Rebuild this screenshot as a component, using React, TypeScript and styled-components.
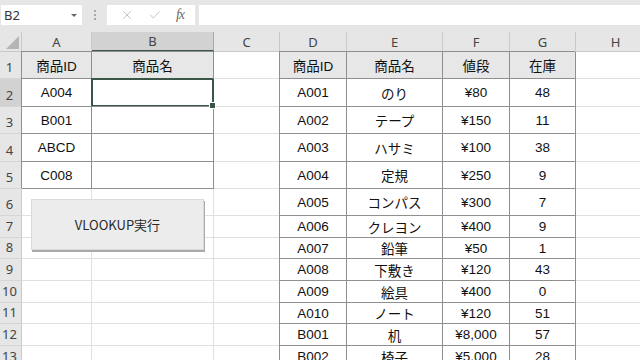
import React from 'react';
import styled, { createGlobalStyle } from 'styled-components';
import { X, Check } from 'lucide-react';

const GlobalStyle = createGlobalStyle`
  html, body {
    margin: 0;
    padding: 0;
    background: #ffffff;
    overflow: hidden;
  }
  body {
    width: 640px;
    height: 360px;
    font-family: 'Liberation Sans', 'Noto Sans CJK JP', sans-serif;
  }
`;

const FRAME = '#8f8f8f';
const GRID = '#e0e0e0';
const HEAD_LINE = '#c9c9c9';
const SELECT = '#3a5646';

const Window = styled.div`
  width: 640px;
  height: 360px;
  overflow: hidden;
  display: flex;
  flex-direction: column;
  background: #fff;
`;

const FormulaBar = styled.div`
  flex: none;
  height: 32px;
  box-sizing: border-box;
  padding-top: 5px;
  background: #e6e6e6;
  display: flex;
  align-items: flex-start;
`;

const NameBox = styled.div`
  width: 81px;
  height: 20px;
  margin-left: 1px;
  box-sizing: border-box;
  padding: 0 5px 0 3px;
  background: #fff;
  display: flex;
  align-items: center;
  justify-content: space-between;
  font: 13px 'Noto Sans', sans-serif;
  color: #333;
`;

const DropArrow = styled.span`
  width: 0;
  height: 0;
  border-left: 3px solid transparent;
  border-right: 3px solid transparent;
  border-top: 3px solid #666;
`;

const Grip = styled.div`
  width: 2px;
  height: 12px;
  margin: 4px 11px 0 12px;
  background: radial-gradient(circle, #a8a8a8 0.9px, transparent 1.1px) 0 0 / 2px 4px repeat-y;
`;

const FuncBox = styled.div`
  width: 88px;
  height: 20px;
  background: #fff;
  display: flex;
  align-items: center;
  justify-content: space-around;
  padding: 0 4px 0 6px;
  box-sizing: border-box;
  color: #b2b2b2;
`;

const Fx = styled.span`
  font: italic 14px 'Liberation Serif', serif;
  color: #6b6b6b;
  letter-spacing: -1px;
`;

const FormulaInput = styled.div`
  flex: 1;
  height: 20px;
  margin-left: 4px;
  background: #fff;
`;

const Sheet = styled.div`
  position: relative;
  display: grid;
  grid-template-columns: 22px 70px 122px 66px 67px 96px 67px 66px 80px;
  grid-template-rows: 20px 27px 28px 27px 28px 27px 27px 22px 21px 22px 22px 21px 22px 22px;
  background: #fff;
`;

const Corner = styled.div`
  background: #e6e6e6;
  border-right: 1px solid ${HEAD_LINE};
  border-bottom: 1px solid ${HEAD_LINE};
  display: flex;
  align-items: flex-end;
  justify-content: flex-end;
  padding: 0 2px 2px 0;
`;

const ColHead = styled.div<{ $active?: boolean }>`
  background: ${(p) => (p.$active ? '#d2d2d2' : '#e6e6e6')};
  border-right: 1px solid ${(p) => (p.$active ? '#a8a8a8' : HEAD_LINE)};
  border-bottom: ${(p) => (p.$active ? `2px solid ${SELECT}` : `1px solid ${HEAD_LINE}`)};
  display: flex;
  align-items: center;
  justify-content: center;
  font: 13px 'Noto Sans', sans-serif;
  color: #444;
`;

const RowHead = styled.div<{ $active?: boolean }>`
  background: ${(p) => (p.$active ? '#d2d2d2' : '#e6e6e6')};
  border-right: 1px solid ${HEAD_LINE};
  border-bottom: 1px solid #d6d6d6;
  display: flex;
  align-items: flex-end;
  justify-content: center;
  padding: 0 2px 2px 0;
  font: 13px 'Noto Sans', sans-serif;
  color: #444;
`;

const Cell = styled.div<{ $framed?: boolean; $head?: boolean; $selected?: boolean }>`
  position: relative;
  background: ${(p) => (p.$head ? '#e7e7e7' : '#fff')};
  border-right: 1px solid ${(p) => (p.$framed ? FRAME : GRID)};
  border-bottom: 1px solid ${(p) => (p.$framed ? FRAME : GRID)};
  box-shadow: ${(p) =>
    p.$selected
      ? `-1px -1px 0 0 ${SELECT}, inset 0 0 0 1px ${SELECT}`
      : p.$framed
      ? `-1px -1px 0 0 ${FRAME}`
      : 'none'};
  ${(p) => (p.$selected ? `border-color: ${SELECT};` : '')}
  display: flex;
  align-items: center;
  justify-content: center;
  font-size: 13.5px;
  color: #111;
  white-space: nowrap;
`;

const FillHandle = styled.span`
  position: absolute;
  right: -3px;
  bottom: -3px;
  width: 5px;
  height: 5px;
  background: ${SELECT};
  border: 1px solid #fff;
  z-index: 2;
`;

const MacroButton = styled.div`
  position: absolute;
  left: 31px;
  top: 167px;
  width: 173px;
  height: 51px;
  box-sizing: border-box;
  background: #ececec;
  border: 1px solid #dadada;
  box-shadow: 1px 2px 0 0 #a9a9a9;
  display: flex;
  align-items: center;
  justify-content: center;
  font: 13px 'Noto Sans CJK JP', sans-serif;
  color: #2a2a2a;
  z-index: 3;
`;

const columns = ['A', 'B', 'C', 'D', 'E', 'F', 'G', 'H'];

const lookup: string[][] = [
  ['商品ID', '商品名'],
  ['A004', ''],
  ['B001', ''],
  ['ABCD', ''],
  ['C008', ''],
];

const products: string[][] = [
  ['商品ID', '商品名', '値段', '在庫'],
  ['A001', 'のり', '¥80', '48'],
  ['A002', 'テープ', '¥150', '11'],
  ['A003', 'ハサミ', '¥100', '38'],
  ['A004', '定規', '¥250', '9'],
  ['A005', 'コンパス', '¥300', '7'],
  ['A006', 'クレヨン', '¥400', '9'],
  ['A007', '鉛筆', '¥50', '1'],
  ['A008', '下敷き', '¥120', '43'],
  ['A009', '絵具', '¥400', '0'],
  ['A010', 'ノート', '¥120', '51'],
  ['B001', '机', '¥8,000', '57'],
  ['B002', '椅子', '¥5,000', '28'],
];

function renderRow(r: number) {
  const left = lookup[r];
  const right = products[r];
  const cells: React.ReactNode[] = [
    <RowHead key="h" $active={r === 1}>{r + 1}</RowHead>,
  ];
  for (let c = 0; c < 2; c++) {
    const selected = r === 1 && c === 1;
    cells.push(
      <Cell key={`l${c}`} $framed={!!left} $head={r === 0} $selected={selected}>
        {left ? left[c] : ''}
        {selected && <FillHandle />}
      </Cell>
    );
  }
  cells.push(<Cell key="c" />);
  for (let c = 0; c < 4; c++) {
    cells.push(
      <Cell key={`r${c}`} $framed={!!right} $head={r === 0}>
        {right ? right[c] : ''}
      </Cell>
    );
  }
  cells.push(<Cell key="h2" />);
  return cells;
}

export default function App() {
  return (
    <Window>
      <GlobalStyle />
      <FormulaBar>
        <NameBox>
          B2
          <DropArrow />
        </NameBox>
        <Grip />
        <FuncBox>
          <X size={14} strokeWidth={1.3} />
          <Check size={14} strokeWidth={1.3} />
          <Fx>fx</Fx>
        </FuncBox>
        <FormulaInput />
      </FormulaBar>
      <Sheet>
        <Corner>
          <svg width="13" height="13" viewBox="0 0 13 13">
            <polygon points="13,0 13,13 0,13" fill="#b5b5b5" />
          </svg>
        </Corner>
        {columns.map((c) => (
          <ColHead key={c} $active={c === 'B'}>
            {c}
          </ColHead>
        ))}
        {products.map((_, r) => renderRow(r))}
        <MacroButton>VLOOKUP実行</MacroButton>
      </Sheet>
    </Window>
  );
}
